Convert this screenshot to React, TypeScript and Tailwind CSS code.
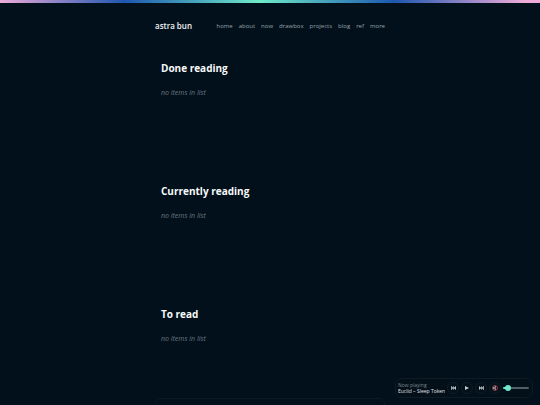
import React from "react";

const links = ["home", "about", "now", "drawbox", "projects", "blog", "ref", "more"];
const lists = ["Done reading", "Currently reading", "To read"];

function PlayerButton({ label, children }: any) {
  return (
    <button
      aria-label={label}
      className="flex size-3 shrink-0 items-center justify-center rounded-full border border-[#0e1e29] bg-[#030f19] text-[#c3cbd1]"
    >
      {children}
    </button>
  );
}

function Header() {
  return (
    <header className="flex h-[46px] items-center justify-between">
      <a href="#" className="text-[8px] font-semibold text-[#f1f4f5]">
        astra bun
      </a>
      <nav className="flex gap-[6px] text-[6px] text-[#98a3ab]">
        {links.map((link) => (
          <a key={link} href={`#${link}`}>
            {link}
          </a>
        ))}
      </nav>
    </header>
  );
}

function ReadingList({ title }: any) {
  return (
    <section className="h-[123px] px-[6px] pt-[11px]">
      <h2 className="text-[10px] leading-4 font-bold text-[#f8fafb]">{title}</h2>
      <p className="mt-3 text-[7px] leading-[10px] text-[#6c7984] italic">no items in list</p>
    </section>
  );
}

function Player() {
  return (
    <aside className="fixed right-[7px] bottom-[7px] flex h-5 items-center gap-[2px] rounded-md border border-[#0c1b26] bg-[#030f19] pr-[3px] pl-[2px]">
      <div className="w-[47px] overflow-hidden text-[5px] leading-[6px] whitespace-nowrap">
        <div className="text-[#7d878f]">Now playing</div>
        <div className="text-[#e0e5e8]">Euclid – Sleep Token</div>
      </div>
      <PlayerButton label="Previous">
        <svg viewBox="0 0 10 8" className="h-1 w-[5px] fill-current">
          <path d="M0 0h1.5v8H0zM5.5 0v8L1.5 4zM10 0v8L5.5 4z" />
        </svg>
      </PlayerButton>
      <PlayerButton label="Play">
        <svg viewBox="0 0 8 8" className="size-1 fill-current">
          <path d="M0 0l8 4-8 4z" />
        </svg>
      </PlayerButton>
      <PlayerButton label="Next">
        <svg viewBox="0 0 10 8" className="h-1 w-[5px] fill-current">
          <path d="M10 0H8.500v8H10zM4.500 0v8l4-4zM0 0v8l4.500-4z" />
        </svg>
      </PlayerButton>
      <PlayerButton label="Mute">
        <svg viewBox="0 0 12 12" className="size-[6px] shrink-0">
          <path d="M2 4h2l4-3v10L4 8H2z" fill="#8f989f" />
          <circle cx="6" cy="6" r="5" fill="none" stroke="#8e4247" strokeWidth="2" />
          <path d="M2.500 2.500l7 7" stroke="#8e4247" strokeWidth="1.500" />
        </svg>
      </PlayerButton>
      <input
        type="range"
        aria-label="Volume"
        min="0"
        max="100"
        defaultValue="10"
        className="h-[6px] w-[26px] appearance-none bg-transparent [&::-webkit-slider-runnable-track]:h-[2px] [&::-webkit-slider-runnable-track]:rounded-full [&::-webkit-slider-runnable-track]:bg-[linear-gradient(90deg,#6febcc_15%,#525e66_15%)] [&::-webkit-slider-thumb]:-mt-[2px] [&::-webkit-slider-thumb]:size-[6px] [&::-webkit-slider-thumb]:appearance-none [&::-webkit-slider-thumb]:rounded-full [&::-webkit-slider-thumb]:bg-[#6febcc]"
      />
    </aside>
  );
}

export default function App() {
  return (
    <div className="flex h-screen flex-col overflow-hidden bg-[#01101a] font-['Open_Sans',sans-serif]">
      <div className="h-[3px] shrink-0 bg-[linear-gradient(90deg,#efabd9_0%,#1d57b0_23%,#6febc8_48%,#1d57b0_73%,#efabd9_97%)]" />
      <div className="mx-auto w-full max-w-[230px]">
        <Header />
        <main>
          {lists.map((title) => (
            <ReadingList key={title} title={title} />
          ))}
        </main>
        <footer className="-mt-[20px] h-12 rounded-t-md border border-[#091a23]" />
      </div>
      <Player />
    </div>
  );
}
